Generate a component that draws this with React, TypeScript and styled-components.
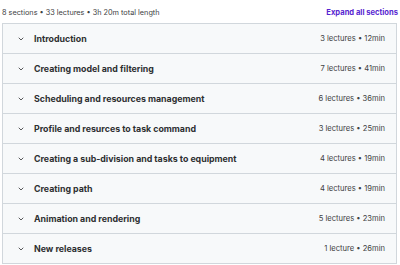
import React from "react";
import styled, { createGlobalStyle } from "styled-components";

const GlobalStyle = createGlobalStyle`
  body {
    margin: 0;
    background: #ffffff;
    font-family: Inter, "Liberation Sans", sans-serif;
  }
`;

const Page = styled.div`
  padding: 5px 2px 0 2px;
`;

const Header = styled.div`
  display: flex;
  align-items: center;
  justify-content: space-between;
  height: 15px;
  margin-bottom: 3px;
`;

const Summary = styled.span`
  font-size: 7.3px;
  color: #3e4143;
`;

const ExpandAll = styled.button`
  border: none;
  background: none;
  padding: 0;
  font-family: inherit;
  font-size: 7.6px;
  font-weight: 700;
  color: #5624d0;
  cursor: pointer;
`;

const Sections = styled.div`
  border: 1px solid #d1d7dc;
  border-bottom: none;
  margin-right: 1px;
`;

const Row = styled.div`
  display: flex;
  align-items: center;
  height: 29px;
  padding: 0 11px 0 14px;
  background: #f7f9fa;
  border-bottom: 1px solid #d1d7dc;
`;

const Chevron = styled.svg`
  width: 8px;
  height: 8px;
  margin-right: 9px;
  flex-shrink: 0;
`;

const Title = styled.span`
  flex: 1;
  font-size: 8.8px;
  font-weight: 700;
  color: #2d2f31;
`;

const Meta = styled.span`
  font-size: 7.6px;
  color: #3e4143;
`;

type Section = {
  title: string;
  meta: string;
};

const sections: Section[] = [
  { title: "Introduction", meta: "3 lectures • 12min" },
  { title: "Creating model and filtering", meta: "7 lectures • 41min" },
  { title: "Scheduling and resources management", meta: "6 lectures • 36min" },
  { title: "Profile and resurces to task command", meta: "3 lectures • 25min" },
  { title: "Creating a sub-division and tasks to equipment", meta: "4 lectures • 19min" },
  { title: "Creating path", meta: "4 lectures • 19min" },
  { title: "Animation and rendering", meta: "5 lectures • 23min" },
  { title: "New releases", meta: "1 lecture • 26min" },
];

const App = () => {
  return (
    <Page>
      <GlobalStyle />
      <Header>
        <Summary>8 sections • 33 lectures • 3h 20m total length</Summary>
        <ExpandAll>Expand all sections</ExpandAll>
      </Header>
      <Sections>
        {sections.map((s) => (
          <Row key={s.title}>
            <Chevron viewBox="0 0 24 24" fill="none" stroke="#2d2f31" strokeWidth="2.4" strokeLinecap="round" strokeLinejoin="round">
              <path d="M6 9l6 6 6-6" />
            </Chevron>
            <Title>{s.title}</Title>
            <Meta>{s.meta}</Meta>
          </Row>
        ))}
      </Sections>
    </Page>
  );
};

export default App;
